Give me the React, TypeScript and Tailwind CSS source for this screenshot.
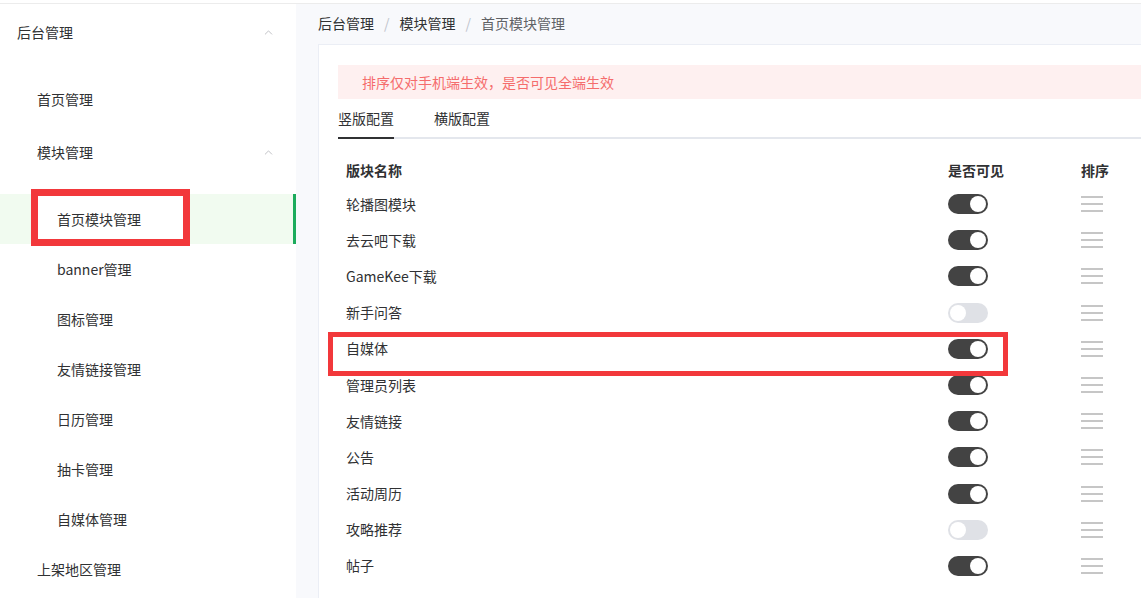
import { ChevronUp } from 'lucide-react'

const font = { fontFamily: "'Noto Sans CJK SC', 'Noto Sans', sans-serif" }

const rows = [
  { name: '轮播图模块', on: true },
  { name: '去云吧下载', on: true },
  { name: 'GameKee下载', on: true },
  { name: '新手问答', on: false },
  { name: '自媒体', on: true },
  { name: '管理员列表', on: true },
  { name: '友情链接', on: true },
  { name: '公告', on: true },
  { name: '活动周历', on: true },
  { name: '攻略推荐', on: false },
  { name: '帖子', on: true },
]

const subItems = ['banner管理', '图标管理', '友情链接管理', '日历管理', '抽卡管理', '自媒体管理']

function Switch({ on }: { on: boolean }) {
  return on ? (
    <div className="w-[40px] h-[20px] rounded-full bg-[#434343] flex items-center justify-end px-[2px]">
      <div className="w-[16px] h-[16px] rounded-full bg-white" />
    </div>
  ) : (
    <div className="w-[40px] h-[20px] rounded-full bg-[#dfe1e6] flex items-center justify-start px-[2px]">
      <div className="w-[16px] h-[16px] rounded-full bg-white" />
    </div>
  )
}

function SortHandle() {
  return (
    <div className="w-[22px] flex flex-col gap-[5px]">
      <div className="h-[2px] bg-[#c6c6c6]" />
      <div className="h-[2px] bg-[#c6c6c6]" />
      <div className="h-[2px] bg-[#c6c6c6]" />
    </div>
  )
}

export default function App() {
  return (
    <div className="relative w-[1141px] h-[598px] overflow-hidden bg-white text-[14px] text-[#303133]" style={font}>
      <div className="h-[4px] bg-white border-b border-[#ececec]" />

      <div className="flex h-[594px]">
        {/* ── Sidebar ─────────────────────────────────────────── */}
        <aside className="w-[296px] shrink-0 bg-white">
          <div className="h-[56px] flex items-center justify-between pl-[17px] pr-[21px]">
            <span>后台管理</span>
            <ChevronUp size={13} strokeWidth={1.2} className="text-[#a0a3a8]" />
          </div>
          <div className="pt-[14px]">
            <div className="h-[50px] flex items-center pl-[37px]">首页管理</div>
            <div className="h-[56px] flex items-center justify-between pl-[37px] pr-[21px]">
              <span>模块管理</span>
              <ChevronUp size={13} strokeWidth={1.2} className="text-[#a0a3a8]" />
            </div>
            <div className="pt-[14px]">
              <div className="relative h-[50px] flex items-center pl-[57px] bg-[#f1fbf0] border-r-[3px] border-[#1cab5c]">
                <div className="absolute left-[31px] top-[-5px] w-[159px] h-[57px] border-[7px] border-[#f2383b] bg-white" />
                <span className="relative">首页模块管理</span>
              </div>
              {subItems.map(s => (
                <div key={s} className="h-[50px] flex items-center pl-[57px]">{s}</div>
              ))}
            </div>
            <div className="h-[50px] flex items-center pl-[37px]">上架地区管理</div>
          </div>
        </aside>

        {/* ── Main ────────────────────────────────────────────── */}
        <main className="flex-1 bg-[#f8f9fc] pl-[22px] pt-[9px]">
          <div className="flex items-center leading-[20px] mb-[11px]">
            <span>后台管理</span>
            <span className="mx-[10px] text-[#c0c4cc]">/</span>
            <span>模块管理</span>
            <span className="mx-[10px] text-[#c0c4cc]">/</span>
            <span className="text-[#606266]">首页模块管理</span>
          </div>

          <div className="w-[900px] h-[600px] bg-white border border-[#ebeef5] pt-[20px] pl-[19px]">
            <div className="h-[34px] bg-[#fef0f0] flex items-center pl-[24px] text-[#f56c6c]">
              排序仅对手机端生效，是否可见全端生效
            </div>

            <div className="flex h-[40px] border-b-2 border-[#e4e7ed]">
              <div className="relative flex items-center text-[#303133]">
                竖版配置
                <div className="absolute left-0 right-0 bottom-[-2px] h-[2px] bg-[#303133]" />
              </div>
              <div className="flex items-center ml-[40px] text-[#303133]">横版配置</div>
            </div>

            <div className="mt-[15px] pl-[8px]">
              <div className="flex items-center h-[32px] font-bold">
                <div className="w-[602px]">版块名称</div>
                <div className="w-[133px]">是否可见</div>
                <div>排序</div>
              </div>
              {rows.map(r => (
                <div key={r.name} className="flex items-center h-[36.2px]">
                  <div className="w-[602px]">{r.name}</div>
                  <div className="w-[133px]"><Switch on={r.on} /></div>
                  <SortHandle />
                </div>
              ))}
            </div>
          </div>
        </main>
      </div>

      {/* annotation box */}
      <div className="absolute left-[328px] top-[332px] w-[680px] h-[44px] border-[5px] border-[#f2383b] pointer-events-none" />
    </div>
  )
}
